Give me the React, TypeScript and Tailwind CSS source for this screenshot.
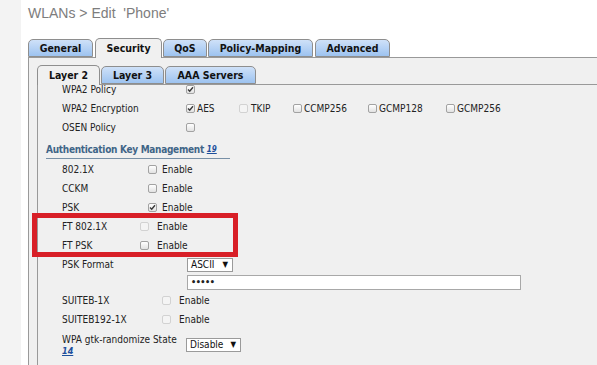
import React from "react";

const Box = ({ checked, disabled }: { checked?: boolean; disabled?: boolean }) => (
  <span
    className={
      "inline-flex w-[9px] h-[9px] shrink-0 rounded-[2px] border items-center justify-center " +
      (disabled
        ? "border-[#d2d2d2] bg-[#f4f4f4]"
        : "border-[#a2a2a2] bg-gradient-to-b from-[#ffffff] to-[#e2e2e2]")
    }
  >
    {checked && (
      <svg width="7" height="7" viewBox="0 0 7 7">
        <path d="M1 3.6 L2.7 5.3 L6 1.2" fill="none" stroke="#3a3a3a" strokeWidth="1.4" />
      </svg>
    )}
  </span>
);

const Tab = ({ label, active, className }: { label: string; active?: boolean; className: string }) => (
  <div
    className={
      "flex items-center justify-center rounded-t-[5px] border border-[#8e8e8e] text-[10.5px] font-bold text-[#111] leading-none " +
      (active
        ? "relative z-10 h-[20px] -mb-[1px] border-b-0 bg-[#f0f0f0] "
        : "h-[18px] bg-gradient-to-b from-[#cfe1f8] to-[#9dc3f0] ") +
      className
    }
  >
    {label}
  </div>
);

const Select = ({ value, className }: { value: string; className: string }) => (
  <div
    className={
      "h-[14px] border border-[#9a9a9a] bg-white flex items-center justify-between pl-[3px] pr-[4px] text-[10px] text-[#111] leading-none " +
      className
    }
  >
    <span>{value}</span>
    <span className="text-[8px]">▼</span>
  </div>
);

export default function App() {
  return (
    <div className="relative w-[597px] h-[365px] overflow-hidden bg-white flex font-['DejaVu_Sans_Condensed','DejaVu_Sans',sans-serif] text-[#222]">
      <div className="w-[21px] shrink-0 bg-[#f3f3f3]" />
      <div className="flex-1 pl-[7px] flex flex-col min-w-0 min-h-0">
        <div className="h-[33px] shrink-0 pt-[5px] leading-[16px] text-[14px] text-[#7d7d7d] font-['Liberation_Sans',Arial,sans-serif] whitespace-pre">
          {"WLANs > Edit  'Phone'"}
        </div>
        <div className="h-[24px] shrink-0 flex items-end">
          <Tab label="General" className="w-[65px]" />
          <Tab label="Security" active className="w-[67px] ml-[2px]" />
          <Tab label="QoS" className="w-[44px] ml-[1px]" />
          <Tab label="Policy-Mapping" className="w-[105px] ml-[1px]" />
          <Tab label="Advanced" className="w-[75px] ml-[2px]" />
        </div>
        <div className="flex-1 min-h-0 bg-[#f0f0f0] border-l border-t border-[#999] pt-[7px] pl-[8px] flex flex-col">
          <div className="h-[19px] shrink-0 flex items-end">
            <Tab label="Layer 2" active className="w-[63px]" />
            <Tab label="Layer 3" className="w-[63px] ml-[1px]" />
            <Tab label="AAA Servers" className="w-[91px] ml-[1px]" />
          </div>
          <div className="flex-1 min-h-0 border-l border-t border-[#999] overflow-hidden text-[10px] leading-[13px]">
            <div className="-mt-[5px] pl-[8px] flex flex-col">
              <div className="h-[19px] shrink-0 flex items-center pl-[16px]">
                <div className="w-[124px] shrink-0">WPA2 Policy</div>
                <Box checked />
              </div>
              <div className="h-[19px] shrink-0 flex items-center pl-[16px]">
                <div className="w-[124px] shrink-0">WPA2 Encryption</div>
                <span className="w-[53px] flex items-center gap-[2px]"><Box checked />AES</span>
                <span className="w-[54px] flex items-center gap-[3px]"><Box disabled />TKIP</span>
                <span className="w-[75px] flex items-center gap-[2px]"><Box />CCMP256</span>
                <span className="w-[78px] flex items-center gap-[2px]"><Box />GCMP128</span>
                <span className="flex items-center gap-[2px]"><Box />GCMP256</span>
              </div>
              <div className="h-[19px] shrink-0 flex items-center pl-[16px]">
                <div className="w-[124px] shrink-0">OSEN Policy</div>
                <Box />
              </div>
              <div className="mt-[6px] shrink-0 self-start w-[184px] border-b border-[#7890a6] pb-[2px] text-[10px] tracking-[-0.3px] font-bold text-[#3f6587] whitespace-nowrap">
                Authentication Key Management{" "}
                <sup className="text-[8px] tracking-normal italic underline text-[#1d4f9c] relative -top-[1px]">19</sup>
              </div>
              <div className="h-[19px] shrink-0 mt-[1px] flex items-center pl-[16px]">
                <div className="w-[86px] shrink-0">802.1X</div>
                <Box />
                <span className="ml-[5px]">Enable</span>
              </div>
              <div className="h-[19px] shrink-0 flex items-center pl-[16px]">
                <div className="w-[86px] shrink-0">CCKM</div>
                <Box />
                <span className="ml-[5px]">Enable</span>
              </div>
              <div className="h-[19px] shrink-0 flex items-center pl-[16px]">
                <div className="w-[86px] shrink-0">PSK</div>
                <Box checked />
                <span className="ml-[5px]">Enable</span>
              </div>
              <div className="h-[19px] shrink-0 flex items-center pl-[16px]">
                <div className="w-[78px] shrink-0">FT 802.1X</div>
                <Box disabled />
                <span className="ml-[8px]">Enable</span>
              </div>
              <div className="h-[19px] shrink-0 flex items-center pl-[16px]">
                <div className="w-[78px] shrink-0">FT PSK</div>
                <Box />
                <span className="ml-[8px]">Enable</span>
              </div>
              <div className="h-[19px] shrink-0 flex items-center pl-[16px]">
                <div className="w-[125px] shrink-0">PSK Format</div>
                <Select value="ASCII" className="w-[46px]" />
              </div>
              <div className="h-[17px] shrink-0 flex items-center pl-[141px]">
                <div className="w-[334px] h-[15px] border border-[#a8a8a8] bg-white flex items-center pl-[3px] text-[9px] font-bold tracking-[-0.5px] text-[#222]">
                  •••••
                </div>
              </div>
              <div className="h-[19px] shrink-0 flex items-center pl-[16px]">
                <div className="w-[100px] shrink-0">SUITEB-1X</div>
                <Box disabled />
                <span className="ml-[8px]">Enable</span>
              </div>
              <div className="h-[19px] shrink-0 flex items-center pl-[16px]">
                <div className="w-[100px] shrink-0">SUITEB192-1X</div>
                <Box disabled />
                <span className="ml-[8px]">Enable</span>
              </div>
              <div className="flex shrink-0 items-start pl-[16px] pt-[4px]">
                <div className="w-[124px] shrink-0 flex flex-col">
                  <span className="whitespace-nowrap">WPA gtk-randomize State</span>
                  <span className="text-[9px] leading-[10px] font-bold italic underline text-[#1d4f9c]">14</span>
                </div>
                <Select value="Disable" className="w-[55px] mt-[5px]" />
              </div>
            </div>
          </div>
        </div>
      </div>
      <div className="absolute left-[32px] top-[213px] w-[206px] h-[44px] border-[5px] border-[#d81f27]" />
    </div>
  );
}
